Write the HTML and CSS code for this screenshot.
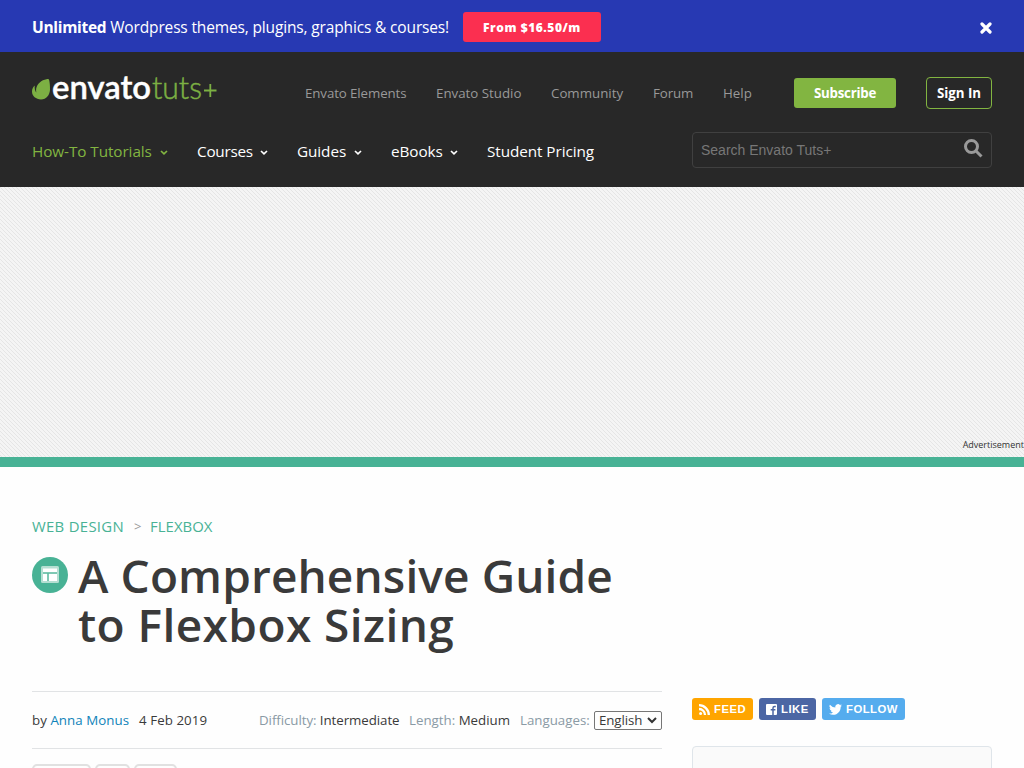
FILE: index.html
```html
<!DOCTYPE html>
<html lang="en">
<head>
<meta charset="utf-8">
<title>A Comprehensive Guide to Flexbox Sizing</title>
<link rel="stylesheet" href="styles.css">
</head>
<body>
<div class="promo">
  <p class="promo-text"><b>Unlimited</b> <span>Wordpress themes, plugins, graphics &amp; courses!</span></p>
  <a class="promo-button">From $16.50/m</a>
  <svg class="close" width="12" height="12" viewBox="0 0 12 12"><path d="M2 2l8 8M10 2l-8 8"/></svg>
</div>
<header class="header">
  <div class="top-row">
    <svg class="logo" width="190" height="32" viewBox="0 0 190 32">
      <path class="leaf" d="M14.500 2.200C9.500 2.800 5 7 4.200 11.500C4 13 4 14.300 4.300 15.500C3 14 2.500 11.500 2.700 8.500C1 10 0 12 0 14.500C0 19 4 22.400 9 22.400C14.500 22.400 17.600 18 18 12.700C18.200 9 17.500 2.800 16.700 2.300C16.300 2 15.500 2 14.500 2.200z"/>
      <text class="logo-main" x="20" y="22" textLength="99" lengthAdjust="spacingAndGlyphs">envato</text>
      <text class="logo-sub" x="120" y="22" textLength="50" lengthAdjust="spacingAndGlyphs">tuts</text>
      <path class="logo-plus" d="M172 13.500h12.500M178.300 7v13"/>
    </svg>
    <nav class="site-links">
      <a class="w-elements">Envato Elements</a><a class="w-studio">Envato Studio</a><a class="w-community">Community</a><a class="w-forum">Forum</a><a class="w-help">Help</a>
    </nav>
    <a class="subscribe">Subscribe</a>
    <a class="sign-in">Sign In</a>
  </div>
  <div class="bottom-row">
    <nav class="main-links">
      <a class="active w-howto"><span>How-To Tutorials</span><svg width="8" height="5" viewBox="0 0 8 5"><path d="M1 1l3 2.800L7 1"/></svg></a>
      <a class="w-courses"><span>Courses</span><svg width="8" height="5" viewBox="0 0 8 5"><path d="M1 1l3 2.800L7 1"/></svg></a>
      <a class="w-guides"><span>Guides</span><svg width="8" height="5" viewBox="0 0 8 5"><path d="M1 1l3 2.800L7 1"/></svg></a>
      <a class="w-ebooks"><span>eBooks</span><svg width="8" height="5" viewBox="0 0 8 5"><path d="M1 1l3 2.800L7 1"/></svg></a>
      <a class="w-pricing"><span>Student Pricing</span></a>
    </nav>
    <div class="search"><span>Search Envato Tuts+</span>
      <svg width="19" height="19" viewBox="0 0 19 19"><circle cx="7.500" cy="7.500" r="6"/><path d="M12 12l5.500 5.500"/></svg>
    </div>
  </div>
</header>
<div class="ad"><span>Advertisement</span></div>
<div class="page">
  <main class="article">
    <div class="crumbs"><a class="w-web">WEB DESIGN</a><i>&gt;</i><a class="w-flexbox">FLEXBOX</a></div>
    <div class="heading">
      <svg class="badge" width="36" height="36" viewBox="0 0 36 36">
        <circle cx="18" cy="18" r="18" fill="#48b295"/>
        <rect x="9" y="9" width="18" height="17" rx="1.500" fill="#b5dfd2"/>
        <path d="M11 11.500h14v3.500H11zM11 17h4v7h-4zM17 17h8v7h-8z" fill="#fff"/>
        <path d="M11 16h14M16 16v8" stroke="#48b295"/>
      </svg>
      <h1><span class="line-one">A Comprehensive Guide</span><br><span class="line-two">to Flexbox Sizing</span></h1>
    </div>
    <div class="meta">
      <span class="by">by <a>Anna Monus</a></span><span class="date">4 Feb 2019</span>
      <span class="difficulty"><i>Difficulty:</i> Intermediate</span><span class="length"><i>Length:</i> Medium</span><span class="languages"><i>Languages:</i></span>
      <span class="select">English<svg width="10" height="7" viewBox="0 0 10 7"><path d="M1 1l4 4 4-4"/></svg></span>
    </div>
    <div class="shares"><span class="share-wide"></span><span class="share-small"></span><span class="share-mid"></span></div>
  </main>
  <aside class="side">
    <div class="social">
      <a class="feed"><svg width="11" height="11" viewBox="0 0 11 11"><circle cx="1.600" cy="9.400" r="1.500" fill="#fff"/><path d="M0 5a6 6 0 0 1 6 6M0 1.200A9.800 9.800 0 0 1 9.800 11" fill="none" stroke="#fff" stroke-width="2.300"/></svg>FEED</a>
      <a class="like"><svg width="11" height="11" viewBox="0 0 11 11"><rect width="11" height="11" rx="1" fill="#fff"/><path d="M9.800 2.500H8.600Q7 2.500 7 4v7M4.700 5.800h4.700" fill="none" stroke="#4c66a4" stroke-width="1.500"/></svg>LIKE</a>
      <a class="follow"><svg width="13" height="11" viewBox="0 0 24 20"><path fill="#fff" d="M24 2.400a10 10 0 0 1-2.800.8A5 5 0 0 0 23.300.5a10 10 0 0 1-3.100 1.200A4.900 4.900 0 0 0 11.800 6.200 14 14 0 0 1 1.700 1a4.900 4.900 0 0 0 1.500 6.600A4.900 4.900 0 0 1 1 7v.1a4.900 4.900 0 0 0 3.900 4.800 5 5 0 0 1-2.200.1 4.900 4.900 0 0 0 4.600 3.400A9.900 9.900 0 0 1 0 17.500 14 14 0 0 0 7.500 19.700c9.100 0 14-7.500 14-14V5A10 10 0 0 0 24 2.400z"/></svg>FOLLOW</a>
    </div>
    <div class="box"></div>
  </aside>
</div>
</body>
</html>
```
FILE: styles.css
```css
* { box-sizing: border-box; }
body { margin: 0; height: 768px; overflow: hidden; background: #fefefe; font-family: "Open Sans", "Noto Sans", sans-serif; color: #3a3a3a; white-space: nowrap; }
svg { display: block; flex: none; }
.promo { height: 52px; background: #2739b3; display: flex; align-items: center; padding: 0 32px; color: #fff; }
.promo-text { margin: 2px 0 0; width: 431px; font-size: 15.5px; letter-spacing: -0.15px; }
.promo-text b { letter-spacing: -0.3px; }
.promo-button { width: 138px; height: 30px; margin-top: 2px; border-radius: 3px; background: #fb2f50; font-size: 12px; font-weight: 800; line-height: 31px; text-align: center; letter-spacing: .55px; }
.close { margin: 4px 0 0 auto; fill: none; stroke: #fff; stroke-width: 3.2; stroke-linecap: round; }
.header { height: 135px; background: #282828; padding: 25px 32px 0; }
.top-row { height: 32px; display: flex; align-items: flex-start; }
.logo { overflow: visible; }
.logo .leaf { fill: #7cb043; }
.logo-main { font: 600 32px Lato, sans-serif; fill: #fff; stroke: #fff; stroke-width: .4; }
.logo-sub { font: 300 32px Lato, sans-serif; fill: #7cb043; stroke: #7cb043; stroke-width: .5; }
.logo-plus { stroke: #7cb043; stroke-width: 1.8; }
.site-links { display: flex; width: 489px; margin-left: 83px; font-size: 13.3px; line-height: 32px; color: #999; }
.w-elements { width: 131px; letter-spacing: -.1px; } .w-studio { width: 115px; } .w-community { width: 102px; } .w-forum { width: 70px; letter-spacing: -.1px; }
.subscribe { width: 102px; height: 30px; margin-top: 1px; border-radius: 3px; background: #82b541; color: #fff; font-size: 13.3px; font-weight: 700; line-height: 30px; text-align: center; letter-spacing: -.25px; }
.sign-in { width: 66px; height: 32px; margin-left: 30px; border: 1px solid #82b541; border-radius: 4px; color: #fff; font-size: 13.3px; font-weight: 700; line-height: 30px; text-align: center; letter-spacing: -.05px; }
.bottom-row { display: flex; justify-content: space-between; margin-top: 23px; }
.main-links { display: flex; font-size: 15.3px; line-height: 38px; color: #fff; letter-spacing: -.08px; }
.main-links a { display: flex; justify-content: space-between; align-items: center; margin-right: 29px; }
.main-links svg { margin-top: 2px; fill: none; stroke: currentColor; stroke-width: 1.7; }
.main-links .active { color: #82b541; }
.w-howto { width: 136px; } .w-courses { width: 71px; letter-spacing: -.25px; } .w-guides { width: 65px; } .w-ebooks { width: 67px; }
.search { width: 300px; height: 36px; border: 1px solid #404040; border-radius: 4px; padding: 0 8px; display: flex; justify-content: space-between; font: 14px/35px "Liberation Sans", Arial, sans-serif; color: #777; }
.search svg { margin-top: 6px; fill: none; stroke: #999; stroke-width: 3; }
.ad { height: 280px; border-bottom: 10px solid #48b295; background: repeating-linear-gradient(45deg, #f4f4f4 0 1.414px, #e5e5e5 1.414px 2.121px, #f4f4f4 2.121px 2.828px); display: flex; justify-content: flex-end; align-items: flex-end; font-size: 9px; line-height: 12px; padding-bottom: 6px; color: #333; }
.page { display: flex; padding: 0 32px; gap: 30px; }
.article { width: 630px; }
.crumbs { display: flex; margin-top: 48px; font-size: 14.9px; line-height: 22px; color: #48b295; }
.crumbs .w-web { width: 102px; letter-spacing: .3px; }
.crumbs .w-flexbox { letter-spacing: .05px; }
.crumbs i { width: 16px; font-style: normal; font-size: 13px; color: #999; }
.heading { display: flex; gap: 10px; margin-top: 14px; }
.badge { margin-top: 6px; }
h1 { margin: 0; font-size: 46px; line-height: 49px; font-weight: 560; }
.line-one { letter-spacing: .13px; }
.line-two { letter-spacing: .42px; }
.meta { display: flex; align-items: center; height: 58px; margin-top: 42px; border-top: 1px solid #e1e3e5; border-bottom: 1px solid #e1e3e5; font-size: 13.3px; }
.meta i { font-style: normal; color: #8a9aa5; }
.meta a { color: #0f83b9; }
.by { width: 107px; letter-spacing: .05px; } .date { width: 120px; letter-spacing: .07px; } .difficulty { width: 150px; letter-spacing: -.06px; } .length { width: 111px; } .languages { width: 74px; }
.select { width: 68px; height: 19px; border: 1px solid #767676; border-radius: 2px; padding: 0 4px; display: flex; align-items: center; justify-content: space-between; line-height: 17px; letter-spacing: -.1px; }
.select svg { fill: none; stroke: #333; stroke-width: 2; }
.shares { display: flex; margin-top: 15px; gap: 4px; }
.shares span { height: 30px; border: 2px solid #e1e1e1; border-radius: 5px; }
.share-wide { width: 59px; } .share-small { width: 35px; } .share-mid { width: 43px; }
.side { width: 300px; padding-top: 231px; }
.social { display: flex; gap: 6px; }
.social a { height: 22px; display: flex; align-items: center; gap: 5px; padding-left: 7px; border-radius: 3px; color: #fff; font: bold 11.3px "Liberation Sans", Arial, sans-serif; letter-spacing: .5px; }
.social .feed { width: 61px; background: #ffa500; gap: 4px; }
.social .like { width: 57px; background: #4c66a4; gap: 4px; }
.social .follow { width: 83px; background: #55acee; gap: 4px; }
.box { height: 60px; margin-top: 26px; border: 1px solid #dfe5ea; border-radius: 4px; background: #fafafa; }
```
